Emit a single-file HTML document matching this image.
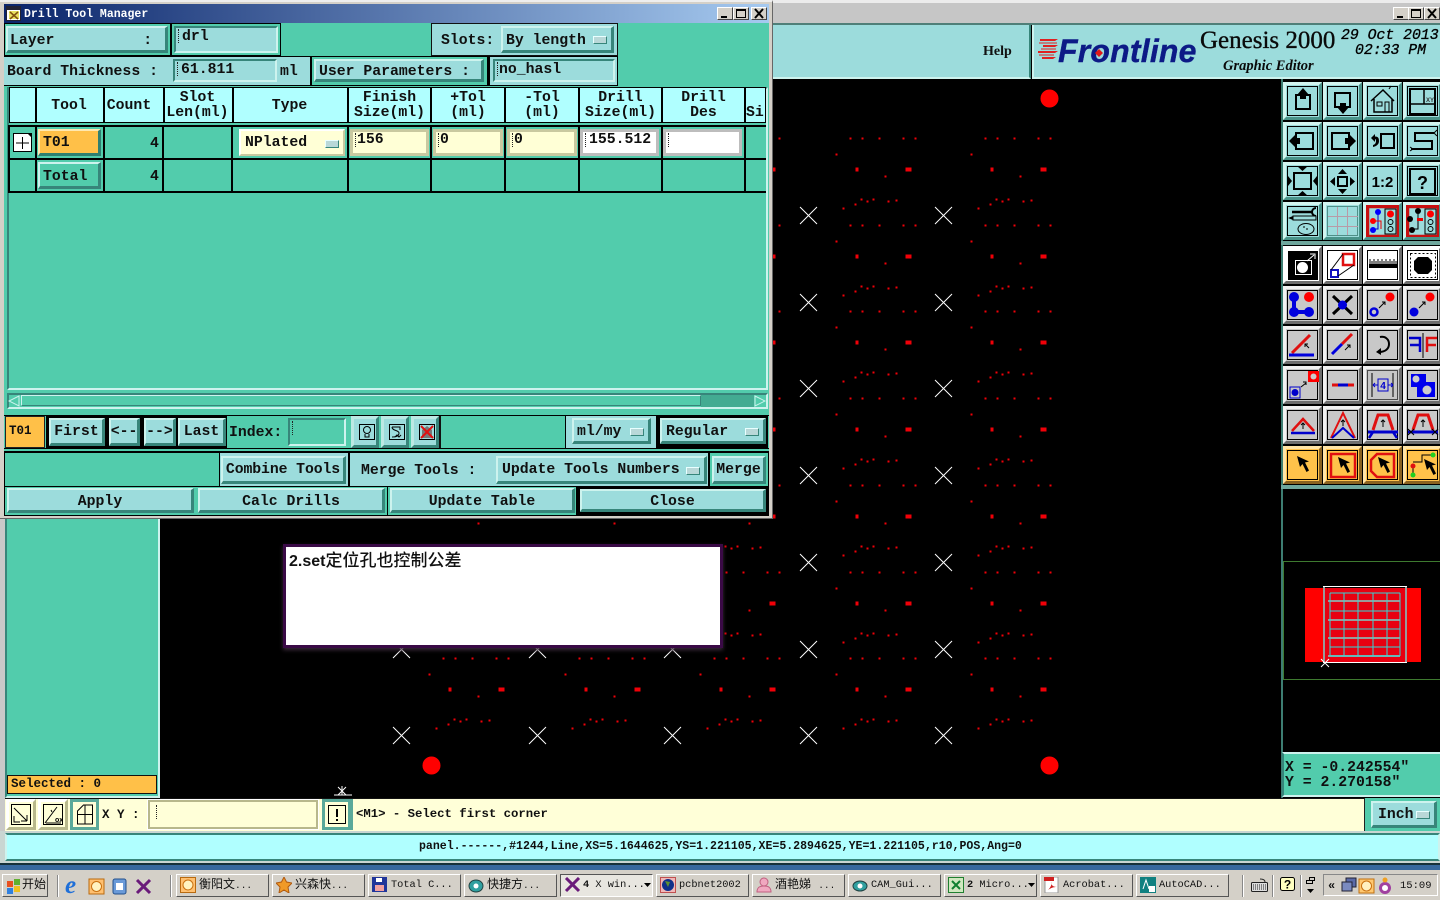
<!DOCTYPE html>
<html><head><meta charset="utf-8"><title>Drill Tool Manager</title>
<style>
html,body{margin:0;padding:0;width:1440px;height:900px;overflow:hidden;background:#000}
div,span,svg{position:absolute;box-sizing:border-box}
body{font:bold 14.8px/1 "Liberation Mono","Noto Sans CJK SC",monospace;color:#101010}
.tx{white-space:pre;line-height:16px}
.b{display:flex;align-items:center;justify-content:center;background:#9cdcdc;border:solid;border-width:2px 3px 3px 2px;border-color:#cdf3ee #37857a #37857a #cdf3ee;white-space:pre;padding-top:2px}
.p{padding-top:4px}
.l{justify-content:flex-start;padding-left:3px}
.i{background:#9cdcdc;border:2px solid;border-color:#37857a #cdf3ee #cdf3ee #37857a;white-space:pre;padding:0 0 0 6px;line-height:18px}
.i:before{content:"";position:absolute;left:2px;top:1px;height:14px;width:0;border-left:1px dotted #222}
.yi{background:#ffffd6;border:3px solid;border-color:#c9c9a0;white-space:pre;padding:0 0 0 4px;line-height:17px}
.yi:before{content:"";position:absolute;left:2px;top:1px;height:14px;width:0;border-left:1px dotted #222}
.wi{background:#fff;border-color:#bdbdbd;padding-left:6px}
.hd{background:#b0ffff;display:flex;align-items:center;justify-content:center;text-align:center;line-height:15px;white-space:pre;padding-top:2px}
.ln{background:#000}
.opt:after{content:"";position:absolute;right:4px;top:50%;margin-top:-3px;width:12px;height:6px;background:#b9d8d8;border:1px solid;border-color:#e8ffff #37857a #37857a #e8ffff}
.t{width:39px;height:38px;background:#9cdcdc;border:3px solid;border-color:#d2f5f0 #4a948a #4a948a #d2f5f0;overflow:hidden}
.g{background:#c8c8c8;border-color:#f2f2f2 #6e6e6e #6e6e6e #f2f2f2}
.w{background:#fff;border-color:#fff #6e6e6e #6e6e6e #fff}
.o{background:#ffc24a;border-color:#ffe4a6 #8a6220 #8a6220 #ffe4a6}
.t svg{left:-3px;top:-3px;width:39px;height:38px}
.tk{top:874px;height:23px;width:93px;background:#d4d0c8;border:1px solid;border-color:#fff #555 #555 #fff;font:10.3px/21px "Liberation Mono","Noto Sans CJK SC",monospace;color:#111;white-space:pre;overflow:hidden}
.tk span{left:22px;top:0}
.tk svg{left:3px;top:2px}
.tk .c{font-size:12px}
.tk i{font-style:normal;font-size:9.500px}
.wb{width:16px;height:13px;top:7px;background:#d4d0c8;border:1px solid;border-color:#fff #444 #444 #fff}
.wb svg{left:0;top:0}
.sep{width:2px;background:#fff;border-left:1px solid #888}
</style></head><body>

<!-- Main window background -->
<div style="left:0;top:0;width:1440px;height:900px;background:#000"></div>
<div style="left:773px;top:0;width:667px;height:3px;background:#ececec"></div>
<div style="left:773px;top:3px;width:667px;height:20px;background:#c6c6c6"></div>
<div style="left:773px;top:23px;width:667px;height:2px;background:#4f7f78"></div>

<div class="wb" style="left:1393px"><svg width="14" height="11"><rect x="3" y="8" width="6" height="2"/></svg></div>
<div class="wb" style="left:1408px"><svg width="14" height="11"><rect x="2.500" y="1.500" width="9" height="8" fill="none" stroke="#000"/><rect x="2" y="1" width="10" height="2"/></svg></div>
<div class="wb" style="left:1424px"><svg width="14" height="11"><path d="M3 1l8 9M11 1l-8 9" stroke="#000" stroke-width="2"/></svg></div>

<!-- Header band -->
<div style="left:773px;top:25px;width:258px;height:54px;background:#9cdcdc;border-bottom:2px solid #cdf3ee;border-right:2px solid #37857a"></div>
<div class="tx" style="left:983px;top:44px;font:bold 14px/16px 'Liberation Serif',serif">Help</div>
<div style="left:1032px;top:25px;width:408px;height:54px;background:#9cdcdc;border-left:2px solid #cdf3ee;border-bottom:2px solid #cdf3ee"></div>
<svg style="left:1038px;top:38px" width="22" height="25"><path d="M2 1h18l-3 2H2zM5 7h15l-3 2H5zM0 13h20l-3 2H0zM4 19h14l-3 2H4z" fill="#e02020"/><path d="M1 5h18M3 11h15M1 17h15" stroke="#e02020"/></svg>
<div class="tx" style="left:1058px;top:32px;font:italic bold 32px/38px 'Liberation Sans',sans-serif;color:#0c1a86;letter-spacing:.2px;-webkit-text-stroke:.4px #0c1a86">Frontline</div>
<svg style="left:1093px;top:47px" width="12" height="12"><path d="M6 2l4 4-4 4-4-4z" fill="#e01818"/></svg>
<div class="tx" style="left:1200px;top:26px;font:25px/29px 'Liberation Serif',serif;color:#0a0a0a;-webkit-text-stroke:.35px #0a0a0a">Genesis 2000</div>
<div class="tx" style="left:1223px;top:58px;font:italic bold 14.5px/17px 'Liberation Serif',serif;color:#0a0a0a">Graphic Editor</div>
<div class="tx" style="left:1341px;top:28px;font:italic 14.8px/16px 'Liberation Mono',monospace;color:#000;-webkit-text-stroke:.3px #000">29 Oct 2013</div>
<div class="tx" style="left:1355px;top:43px;font:italic 14.8px/16px 'Liberation Mono',monospace;color:#000;-webkit-text-stroke:.3px #000">02:33 PM</div>

<!-- PCB canvas -->
<svg style="left:160px;top:79px" width="1120" height="719" viewBox="160 79 1120 719" shape-rendering="crispEdges">
<defs>
<g id="c">
<g fill="#f00008">
<rect x="41" y="-78" width="2" height="2"/><rect x="53" y="-78" width="2" height="2"/><rect x="70" y="-78" width="2" height="2"/><rect x="94" y="-78" width="2" height="2"/><rect x="106" y="-78" width="2" height="2"/>
<rect x="27" y="-62" width="2" height="2"/>
<rect x="47" y="-48" width="3" height="4"/><rect x="97" y="-48" width="6" height="4"/>
<rect x="76" y="-40" width="2" height="2"/>
<rect x="52" y="-17" width="2" height="2"/><rect x="46" y="-12" width="2" height="2"/><rect x="58" y="-15" width="2" height="2"/><rect x="64" y="-17" width="2" height="2"/><rect x="79" y="-15" width="2" height="2"/><rect x="87" y="-16" width="2" height="2"/><rect x="34" y="-8" width="2" height="2"/>
</g>
<path d="M-8.500 -8.500L8.500 8.500M8.500 -8.500L-8.500 8.500" stroke="#fff" stroke-width="1" fill="none" shape-rendering="auto"/>
</g>
<g id="r"><use href="#c" x="401.500"/><use href="#c" x="537.500"/><use href="#c" x="672.500"/><use href="#c" x="808.500"/><use href="#c" x="943.500"/></g>
</defs>
<use href="#r" y="215.500"/><use href="#r" y="302.500"/><use href="#r" y="388.500"/><use href="#r" y="475.500"/><use href="#r" y="562.500"/><use href="#r" y="649.500"/><use href="#r" y="735.500"/>
<g fill="#f00" shape-rendering="auto"><circle cx="1049.500" cy="98.500" r="9"/><circle cx="431.500" cy="765.500" r="9"/><circle cx="1049.500" cy="765.500" r="9"/></g>
<path d="M334 795h18M338 787l8 8M346 787l-8 8M342 786v9" stroke="#fff" fill="none" shape-rendering="auto"/>
</svg>

<!-- Left panel -->
<div style="left:0;top:515px;width:5px;height:352px;background:#c9c9c9"></div>
<div style="left:5px;top:519px;width:155px;height:279px;background:#52ccac;border-right:2px solid #cdf3ee;border-left:2px solid #37857a;border-bottom:2px solid #cdf3ee"></div>
<div style="left:7px;top:775px;width:150px;height:19px;background:#ffc048;border:1px solid #111;font-size:12.500px;line-height:17px;padding-left:3px;white-space:pre">Selected : 0</div>

<!-- Toolbars right -->
<div style="left:1280px;top:79px;width:160px;height:410px;background:#000"></div>
<div style="left:1281px;top:79px;width:2px;height:719px;background:#3d7d72"></div>
<div style="left:1281px;top:241px;width:159px;height:4px;background:#6fa79d"></div>
<div style="left:1281px;top:485px;width:159px;height:4px;background:#6fa79d"></div>

<div class="t" style="left:1283px;top:82px"><svg><rect x="4.500" y="4.500" width="30" height="29" fill="none" stroke="#000"/><rect x="13" y="13" width="14" height="14" fill="none" stroke="#000" stroke-width="2"/><path d="M20 6l6 7h-3v4h-6v-4h-3z"/></svg></div>
<div class="t" style="left:1323px;top:82px"><svg><rect x="4.500" y="4.500" width="30" height="29" fill="none" stroke="#000"/><rect x="12" y="11" width="15" height="14" fill="none" stroke="#000" stroke-width="2"/><path d="M20 32l-6-7h3v-4h6v4h3z"/></svg></div>
<div class="t" style="left:1363px;top:82px"><svg><rect x="4.500" y="4.500" width="30" height="29" fill="none" stroke="#000"/><path d="M8 19L20 8l11 11M11 17v13h18V17" fill="none" stroke="#000" stroke-width="1.500"/><rect x="14" y="20" width="5" height="4" fill="none" stroke="#000"/><rect x="22" y="20" width="4" height="10" fill="none" stroke="#000"/><path d="M26 7l2-3" stroke="#000"/></svg></div>
<div class="t" style="left:1403px;top:82px"><svg><rect x="4.500" y="4.500" width="30" height="29" fill="none" stroke="#000"/><rect x="7" y="7" width="25" height="25" fill="none" stroke="#000" stroke-width="2"/><path d="M7 22h25M21 7v15" stroke="#000" stroke-width="1.500"/><text x="23" y="20" font-size="6" font-family="Liberation Sans" fill="#333">XY</text></svg></div>

<div class="t" style="left:1283px;top:122px"><svg><rect x="4.500" y="4.500" width="30" height="29" fill="none" stroke="#000"/><rect x="13" y="11" width="17" height="16" fill="none" stroke="#000" stroke-width="2"/><path d="M6 19l6-6v3h5v6h-5v3z"/></svg></div>
<div class="t" style="left:1323px;top:122px"><svg><rect x="4.500" y="4.500" width="30" height="29" fill="none" stroke="#000"/><rect x="9" y="11" width="17" height="16" fill="none" stroke="#000" stroke-width="2"/><path d="M33 19l-6-6v3h-5v6h5v3z"/></svg></div>
<div class="t" style="left:1363px;top:122px"><svg><rect x="4.500" y="4.500" width="30" height="29" fill="none" stroke="#000"/><rect x="18" y="12" width="13" height="14" fill="none" stroke="#000" stroke-width="2"/><path d="M8 16l4-4v2.500c3 0 4 1.500 4 4.500s-2 5-6 6v-2c2-.5 3-2 3-4s-1-2-1-2v3z"/></svg></div>
<div class="t" style="left:1403px;top:122px"><svg><rect x="4.500" y="4.500" width="30" height="29" fill="none" stroke="#000"/><path d="M31 11H12v8h17v8H8" fill="none" stroke="#000" stroke-width="2"/><path d="M34 8l-3 3 3 3M7 25l3 2-3 2" fill="none" stroke="#000"/></svg></div>

<div class="t" style="left:1283px;top:162px"><svg><rect x="4.500" y="4.500" width="30" height="29" fill="none" stroke="#000"/><rect x="11" y="11" width="17" height="16" fill="none" stroke="#000" stroke-width="2"/><path d="M14 4h11l-5.500 5zM14 34h11l-5.500-5zM5 14v10l4-5zM34 14v10l-4-5z"/></svg></div>
<div class="t" style="left:1323px;top:162px"><svg><rect x="4.500" y="4.500" width="30" height="29" fill="none" stroke="#000"/><rect x="15" y="15" width="9" height="9" fill="none" stroke="#000" stroke-width="2"/><path d="M15 12h9l-4.500-5zM15 27h9l-4.500 5zM12 15v9l-5-4.500zM27 15v9l5-4.500z"/></svg></div>
<div class="t" style="left:1363px;top:162px"><svg><rect x="4.500" y="4.500" width="30" height="29" fill="none" stroke="#000"/><text x="19.500" y="25" text-anchor="middle" font-size="15" font-family="Liberation Sans" font-weight="bold">1:2</text></svg></div>
<div class="t" style="left:1403px;top:162px"><svg><rect x="4.500" y="4.500" width="30" height="29" fill="none" stroke="#000"/><rect x="7" y="7" width="25" height="25" fill="none" stroke="#000" stroke-width="2"/><text x="19.500" y="27" text-anchor="middle" font-size="18" font-family="Liberation Sans" font-weight="bold">?</text></svg></div>

<div class="t" style="left:1283px;top:202px"><svg><rect x="4.500" y="4.500" width="30" height="29" fill="none" stroke="#000"/><path d="M9 10h20" stroke="#000" stroke-width="2.500"/><path d="M33 6a4 4 0 1 0 0 8" fill="none" stroke="#000" stroke-width="2"/><rect x="10" y="14" width="23" height="4" fill="#9cdcdc" stroke="#000"/><path d="M5 16l5-2v4z"/><ellipse cx="23" cy="27" rx="8" ry="5.500" fill="none" stroke="#000"/><path d="M20 25h2M23 27h2" stroke="#000"/></svg></div>
<div class="t" style="left:1323px;top:202px"><svg><rect x="4.500" y="4.500" width="30" height="29" fill="none" stroke="#4f8f88"/><path d="M14.500 5v28M24.500 5v28M5 14.500h30M5 24.500h30" stroke="#b89aa6"/></svg></div>
<div class="t" style="left:1363px;top:202px"><svg><rect x="4.500" y="4.500" width="31" height="30" fill="none" stroke="#c81010" stroke-width="3.500"/><rect x="22" y="7" width="11" height="25" fill="none" stroke="#000"/><circle cx="27.500" cy="12" r="3.500" fill="#f00"/><circle cx="27.500" cy="20" r="2.500" fill="none" stroke="#000"/><circle cx="27.500" cy="27" r="2.500" fill="none" stroke="#000"/><path d="M15 10v17H10" fill="none" stroke="#00c" stroke-width="1"/><path d="M11 19h7v8" fill="none" stroke="#e00"/><circle cx="15" cy="10" r="3" fill="#00f"/><circle cx="10" cy="19" r="3" fill="#f00"/><circle cx="10" cy="28" r="3" fill="#00f"/></svg></div>
<div class="t" style="left:1403px;top:202px"><svg><rect x="4.500" y="4.500" width="31" height="30" fill="none" stroke="#c81010" stroke-width="3.500"/><rect x="22" y="7" width="11" height="25" fill="none" stroke="#000"/><circle cx="27.500" cy="12" r="3.500" fill="#f00"/><circle cx="27.500" cy="20" r="2.500" fill="none" stroke="#000"/><circle cx="27.500" cy="27" r="2.500" fill="none" stroke="#000"/><path d="M15 10v17H10" fill="none" stroke="#000" stroke-width="1"/><path d="M14 16h6v3h-6z" fill="#e00"/><circle cx="15" cy="9" r="3"/><circle cx="7" cy="17" r="3"/><circle cx="9" cy="28" r="3"/></svg></div>

<!-- Set 2 -->
<div class="t w" style="left:1283px;top:246px"><svg><rect x="5" y="5" width="30" height="29"/><rect x="12.500" y="14.500" width="16" height="14" fill="none" stroke="#fff"/><circle cx="19.500" cy="21.500" r="5.500" fill="#fff"/><path d="M24 15l7-6M27 8h5v5" stroke="#fff" fill="none"/></svg></div>
<div class="t w" style="left:1323px;top:246px"><svg><rect x="4.500" y="4.500" width="30" height="29" fill="none" stroke="#000"/><rect x="20" y="8" width="11" height="11" fill="none" stroke="#e01010" stroke-width="2.500"/><rect x="8" y="24" width="7" height="7" fill="none" stroke="#1010c0" stroke-width="2"/><path d="M20 8L8 24M31 19L15 30" stroke="#000"/></svg></div>
<div class="t w" style="left:1363px;top:246px"><svg><rect x="4.500" y="4.500" width="30" height="29" fill="none" stroke="#000"/><rect x="6" y="18" width="28" height="4"/><path d="M7 13v5M9 15v3M11 13v5M13 15v3M15 13v5M17 15v3M19 13v5M21 15v3M23 13v5M25 15v3M27 13v5M29 15v3M31 13v5M33 15v3" stroke="#000"/></svg></div>
<div class="t w" style="left:1403px;top:246px"><svg><rect x="4.500" y="4.500" width="30" height="29" fill="none" stroke="#000"/><rect x="7.500" y="7.500" width="25" height="24" fill="none" stroke="#000" stroke-dasharray="2 2"/><path d="M15 11h10l4 4v9l-4 4H15l-4-4v-9z"/></svg></div>

<div class="t g" style="left:1283px;top:286px"><svg><rect x="4.500" y="4.500" width="30" height="29" fill="none" stroke="#000"/><path d="M11 11v15h15" fill="none" stroke="#00d" stroke-width="4"/><circle cx="11" cy="11" r="5" fill="#00d"/><circle cx="11" cy="26" r="5" fill="#00d"/><circle cx="26" cy="26" r="5" fill="#00d"/><circle cx="26" cy="11" r="5" fill="#f00"/></svg></div>
<div class="t g" style="left:1323px;top:286px"><svg><rect x="4.500" y="4.500" width="30" height="29" fill="none" stroke="#000"/><path d="M10 10l19 18M29 10L10 28" stroke="#000" stroke-width="3"/><circle cx="19.500" cy="19" r="4.500" fill="#00d"/></svg></div>
<div class="t g" style="left:1363px;top:286px"><svg><rect x="4.500" y="4.500" width="30" height="29" fill="none" stroke="#000"/><circle cx="11" cy="26" r="3.500" fill="none" stroke="#00d" stroke-width="2.500"/><circle cx="27" cy="11" r="4.500" fill="#f00"/><path d="M16 22l6-6M19 16h3v3" fill="none" stroke="#000"/></svg></div>
<div class="t g" style="left:1403px;top:286px"><svg><rect x="4.500" y="4.500" width="30" height="29" fill="none" stroke="#000"/><circle cx="11" cy="26" r="4.500" fill="#00d"/><circle cx="27" cy="11" r="4.500" fill="#f00"/><path d="M16 22l6-6M19 16h3v3" fill="none" stroke="#000"/></svg></div>

<div class="t g" style="left:1283px;top:326px"><svg><rect x="4.500" y="4.500" width="30" height="29" fill="none" stroke="#000"/><path d="M9 27L27 9" stroke="#e01010" stroke-width="3"/><path d="M6 29h25" stroke="#00d" stroke-width="3"/><path d="M26 22l-4-4M22 21v-3h3" fill="none" stroke="#000"/></svg></div>
<div class="t g" style="left:1323px;top:326px"><svg><rect x="4.500" y="4.500" width="30" height="29" fill="none" stroke="#000"/><path d="M19 18L29 8" stroke="#e01010" stroke-width="3"/><path d="M9 28L19 18" stroke="#00d" stroke-width="3"/><path d="M22 24l5-5M24 19h3v3" fill="none" stroke="#000"/></svg></div>
<div class="t g" style="left:1363px;top:326px"><svg><rect x="4.500" y="4.500" width="30" height="29" fill="none" stroke="#000"/><path d="M17 11c5-1 9 2 9 7s-4 8-10 8" fill="none" stroke="#000" stroke-width="2"/><path d="M13 26l5-4v7z"/></svg></div>
<div class="t g" style="left:1403px;top:326px"><svg><rect x="4.500" y="4.500" width="30" height="29" fill="none" stroke="#000"/><path d="M6 12h11v14M7 19h10" fill="none" stroke="#00c" stroke-width="2.500"/><path d="M34 12H24v14M24 19h9" fill="none" stroke="#e01010" stroke-width="2.500"/><path d="M20 7v25" stroke="#000"/></svg></div>

<div class="t g" style="left:1283px;top:366px"><svg><rect x="4.500" y="4.500" width="30" height="29" fill="none" stroke="#000"/><rect x="25" y="5" width="11" height="11" fill="#f00"/><circle cx="30.500" cy="10.500" r="3" fill="#ccc"/><rect x="7" y="21" width="10" height="11" fill="none" stroke="#00c"/><circle cx="12" cy="26.500" r="3.500" fill="#00c"/><path d="M18 21l5-4M20 16h3v3" fill="none" stroke="#000"/></svg></div>
<div class="t g" style="left:1323px;top:366px"><svg><rect x="4.500" y="4.500" width="30" height="29" fill="none" stroke="#000"/><path d="M9 19h6M25 19h6" stroke="#e01010" stroke-width="3"/><path d="M15 19h10" stroke="#00c" stroke-width="3"/></svg></div>
<div class="t g" style="left:1363px;top:366px"><svg><rect x="4.500" y="4.500" width="30" height="29" fill="none" stroke="#4a4a4a"/><path d="M9 7v24M30 7v24" stroke="#000"/><rect x="15" y="13" width="10" height="12" fill="none" stroke="#00c"/><path d="M10 19h5M25 19h5M10 19l2-2M10 19l2 2M30 19l-2-2M30 19l-2 2" stroke="#00c"/><text x="20" y="23" text-anchor="middle" font-size="10" fill="#00c" font-family="Liberation Sans">4</text></svg></div>
<div class="t g" style="left:1403px;top:366px"><svg><rect x="4.500" y="4.500" width="30" height="29" fill="none" stroke="#000"/><rect x="8" y="8" width="15" height="13" fill="#00e"/><rect x="14" y="16" width="18" height="15" fill="#00e"/><circle cx="13" cy="13" r="3.500" fill="#ccc"/><circle cx="24" cy="24" r="4.500" fill="#ccc"/></svg></div>

<div class="t g" style="left:1283px;top:406px"><svg><rect x="4.500" y="4.500" width="30" height="29" fill="none" stroke="#000"/><path d="M9 25L20 13l11 12" fill="none" stroke="#e01010" stroke-width="2.500"/><path d="M8 27h24" stroke="#00c" stroke-width="2.500"/><path d="M20 17v6M18 19l2-2 2 2" fill="none" stroke="#000"/></svg></div>
<div class="t g" style="left:1323px;top:406px"><svg><rect x="4.500" y="4.500" width="30" height="29" fill="none" stroke="#000"/><path d="M8 32L20 7l12 25" fill="none" stroke="#e01010" stroke-width="2"/><path d="M9 32l11-10 11 10" fill="none" stroke="#00c" stroke-width="2"/><path d="M20 14v6M18 16l2-2 2 2" fill="none" stroke="#000"/></svg></div>
<div class="t g" style="left:1363px;top:406px"><svg><rect x="4.500" y="4.500" width="30" height="29" fill="none" stroke="#000"/><path d="M10 24l5-15h10l5 15" fill="none" stroke="#e01010" stroke-width="3"/><path d="M5 26h30" stroke="#00c" stroke-width="3"/><path d="M6 32l4-6M34 32l-4-6" stroke="#00c" stroke-width="2.500"/><path d="M20 14v7M18 16l2-2 2 2" fill="none" stroke="#000"/></svg></div>
<div class="t g" style="left:1403px;top:406px"><svg><rect x="4.500" y="4.500" width="30" height="29" fill="none" stroke="#000"/><path d="M10 24l5-15h10l5 15" fill="none" stroke="#e01010" stroke-width="3"/><path d="M5 26h30" stroke="#00c" stroke-width="3"/><path d="M5 23l6 6M11 23l-6 6M29 23l6 6M35 23l-6 6" stroke="#000"/><path d="M20 14v7M18 16l2-2 2 2" fill="none" stroke="#000"/></svg></div>

<div class="t o" style="left:1283px;top:446px"><svg><rect x="4.500" y="4.500" width="30" height="29" fill="none" stroke="#000"/><path d="M14 10l3 11 2.500-3 4 8 2.500-1.500-4-8 4-1z"/></svg></div>
<div class="t o" style="left:1323px;top:446px"><svg><rect x="4.500" y="4.500" width="30" height="29" fill="none" stroke="#000"/><rect x="8" y="8" width="24" height="23" fill="none" stroke="#e01010" stroke-width="2.500"/><path d="M15 11l3 11 2.500-3 4 8 2.500-1.500-4-8 4-1z"/></svg></div>
<div class="t o" style="left:1363px;top:446px"><svg><rect x="4.500" y="4.500" width="30" height="29" fill="none" stroke="#000"/><path d="M14 8h17v23H14l-6-6V14z" fill="none" stroke="#e01010" stroke-width="2.500"/><path d="M15 11l3 11 2.500-3 4 8 2.500-1.500-4-8 4-1z"/></svg></div>
<div class="t o" style="left:1403px;top:446px"><svg><rect x="4.500" y="4.500" width="30" height="29" fill="none" stroke="#000"/><path d="M10 18v10M10 16h9V9h12" fill="none" stroke="#000"/><circle cx="10" cy="20" r="2.500" fill="#e01010"/><circle cx="10" cy="29" r="2.500" fill="#20d020"/><circle cx="30" cy="9" r="2.500" fill="#20d020"/><path d="M21 13l3 11 2.500-3 4 8 2.500-1.500-4-8 4-1z"/></svg></div>

<!-- Mini map -->
<div style="left:1283px;top:561px;width:157px;height:119px;border:1px solid #3e7a30;border-right:0"></div>
<svg style="left:1283px;top:560px" width="157" height="120" viewBox="1283 560 157 120" shape-rendering="crispEdges">
<rect x="1305" y="588" width="18" height="74" fill="#f00"/><rect x="1407" y="588" width="14" height="74" fill="#f00"/><rect x="1323" y="588" width="84" height="74" fill="#e80010"/>
<g fill="none" stroke="#9a9a9a" stroke-width="2"><path d="M1324 587v75M1406 587v75M1328 601h72M1328 620h72M1328 638h72M1328 656h72"/></g>
<g stroke="#30d8d8" stroke-width="1" fill="none"><path d="M1330 593h70M1330 611h70M1330 629h70M1330 647h70M1330 656h70M1330 593v63M1344 593v63M1358 593v63M1373 593v63M1387 593v63M1400 593v63"/></g>
<path d="M1323 586.500h84M1323 662.500h84" stroke="#fff"/>
<path d="M1321 659l8 8M1329 659l-8 8" stroke="#fff" shape-rendering="auto"/>
</svg>

<!-- coordinate box -->
<div style="left:1282px;top:752px;width:158px;height:45px;background:#52ccac;border-top:2px solid #cdf3ee;border-left:2px solid #37857a;border-bottom:2px solid #cdf3ee"></div>
<div class="tx" style="left:1285px;top:760px">X = -0.242554"</div>
<div class="tx" style="left:1285px;top:775px">Y = 2.270158"</div>

<!-- Command bar -->
<div style="left:5px;top:798px;width:1435px;height:33px;background:#ffffd8;border-top:1px solid #111"></div>
<div class="t" style="left:6px;top:799px;width:30px;height:31px;background:#ffffd8;border-color:#fff #b8b88c #b8b88c #fff"><svg style="width:30px;height:31px"><rect x="5.500" y="5.500" width="19" height="20" fill="none" stroke="#000"/><path d="M8 9l13 13M21 22v-6M21 22h-6M8 17v6h6" fill="none" stroke="#000" stroke-width="1"/></svg></div>
<div class="t" style="left:38px;top:799px;width:30px;height:31px;background:#ffffd8;border-color:#fff #b8b88c #b8b88c #fff"><svg style="width:30px;height:31px"><rect x="5.500" y="5.500" width="19" height="20" fill="none" stroke="#000"/><path d="M7 24L19 8M14 13l-1-2M8 24h15" fill="none" stroke="#000"/><text x="17" y="23" font-size="7" font-family="Liberation Sans">ox</text></svg></div>
<div class="t" style="left:70px;top:799px;width:29px;height:31px;background:#ffffd8;border-color:#5aa99a"><svg style="width:29px;height:31px"><path d="M7.500 25V12l6-6h9v19zM7.500 15.500h15M15 6v19" fill="none" stroke="#000"/></svg></div>
<div class="tx" style="left:102px;top:807px;font-size:12.500px">X Y :</div>
<div style="left:148px;top:800px;width:170px;height:29px;background:#ffffd8;border:2px solid #b8b88c;outline:1px solid #fff"></div>
<div style="left:156px;top:805px;height:14px;border-left:1px dotted #222"></div>
<div class="t" style="left:322px;top:799px;width:29px;height:31px;background:#ffffd8;border-color:#5aa99a"><svg style="width:29px;height:31px"><rect x="6.500" y="6.500" width="17" height="18" fill="none" stroke="#000"/><rect x="14" y="10" width="2" height="8"/><rect x="14" y="20" width="2" height="2"/></svg></div>
<div style="left:351px;top:799px;width:2px;height:31px;background:#5aa99a"></div>
<div class="tx" style="left:356px;top:806px;font-size:12.300px">&lt;M1&gt; - Select first corner</div>
<div style="left:1364px;top:798px;width:76px;height:33px;background:#52ccac;border-left:1px solid #222"></div>
<div class="b opt l" style="left:1371px;top:801px;width:66px;height:27px;padding-left:5px">Inch</div>

<!-- Status -->
<div style="left:0;top:831px;width:1440px;height:34px;background:#c9d6d2"></div>
<div style="left:5px;top:833px;width:1435px;height:28px;background:#b0ffff;border:2px solid;border-color:#37857a #cdf3ee #37857a #cdf3ee"></div>
<div class="tx" style="left:419px;top:839px;font-size:11.550px;width:620px">panel.------,#1244,Line,XS=5.1644625,YS=1.221105,XE=5.2894625,YE=1.221105,r10,POS,Ang=0</div>

<!-- Taskbar -->
<div style="left:0;top:863px;width:1440px;height:2px;background:#17323a"></div>
<div style="left:0;top:865px;width:1440px;height:5px;background:#37699e"></div>
<div style="left:0;top:870px;width:1440px;height:30px;background:#d4d0c8"></div>
<div class="tk" style="left:2px;width:46px">
<svg width="18" height="18"><rect x="1" y="4" width="6" height="6" fill="#e85020"/><rect x="8" y="2" width="6" height="6" fill="#60b030"/><rect x="1" y="11" width="6" height="6" fill="#3080e0"/><rect x="8" y="9" width="6" height="6" fill="#f0c020"/></svg>
<span class="c" style="left:19px">开始</span></div>
<div class="sep" style="left:57px;top:875px;height:22px"></div>
<svg style="left:64px;top:876px" width="90" height="20">
<text x="1" y="17" font-family="Liberation Serif" font-weight="bold" font-style="italic" font-size="25" fill="#1f6fd8">e</text>
<rect x="25" y="3" width="15" height="15" fill="#ffc070" stroke="#b86a10"/><circle cx="32.500" cy="10.500" r="5" fill="#fff2c0" stroke="#c87010"/>
<rect x="49" y="3" width="13" height="15" rx="2" fill="#6a9ad8" stroke="#23508c"/><rect x="52" y="7" width="7" height="7" fill="#fff"/>
<path d="M73 4l13 13M86 4L73 17" stroke="#6a1a7a" stroke-width="3"/>
</svg>
<div class="sep" style="left:170px;top:875px;height:22px"></div>
<div class="tk" style="left:176px">
<svg width="16" height="16"><rect x=".5" y=".5" width="15" height="15" fill="#ffc070" stroke="#b86a10"/><circle cx="8" cy="8" r="5" fill="#fff2c0" stroke="#c87010"/></svg>
<span class="c">衡阳文<i>...</i></span></div>
<div class="tk" style="left:272px">
<svg width="16" height="16"><path d="M8 0l2.500 5 5.500 1-4 4 1 6-5-3-5 3 1-6-4-4 5.500-1z" fill="#f09a28" stroke="#b05a10"/></svg>
<span class="c">兴森快<i>...</i></span></div>
<div class="tk" style="left:368px">
<svg width="16" height="16"><rect width="15" height="15" fill="#20359a"/><rect x="3" y="8" width="9" height="6" fill="#f0a0a0"/><rect x="4" y="1" width="6" height="4" fill="#fff"/></svg>
<span>Total C...</span></div>
<div class="tk" style="left:464px">
<svg width="16" height="16"><ellipse cx="8" cy="9" rx="7" ry="6" fill="#30a0a0" stroke="#204040"/><circle cx="8" cy="9" r="2.500" fill="#fff"/></svg>
<span class="c">快捷方<i>...</i></span></div>
<div class="tk" style="left:560px;background:#e8e6e0;border-color:#555 #fff #fff #555">
<svg width="18" height="16"><path d="M2 1l13 13M15 1L2 14" stroke="#6a1a7a" stroke-width="3"/></svg>
<span><b>4</b> X win...</span><svg style="left:83px;top:8px" width="7" height="4"><path d="M0 0h7L3.500 4z"/></svg></div>
<div class="tk" style="left:656px">
<svg width="16" height="16"><rect x=".5" y=".5" width="15" height="15" fill="#f0b8b8" stroke="#c05050"/><circle cx="8" cy="8" r="6" fill="#10308a"/><path d="M5 4l5 1-2 5z" fill="#609030"/></svg>
<span>pcbnet2002</span></div>
<div class="tk" style="left:752px">
<svg width="16" height="16"><circle cx="8" cy="5" r="4" fill="#f0a8c0" stroke="#c06080"/><path d="M1 15c0-5 3-6 7-6s7 1 7 6z" fill="#f0a8c0" stroke="#c06080"/></svg>
<span class="c">酒艳娣 <i>...</i></span></div>
<div class="tk" style="left:848px">
<svg width="16" height="16"><ellipse cx="8" cy="9" rx="7" ry="5" fill="#30a0a0" stroke="#204040"/><circle cx="8" cy="9" r="2.500" fill="#fff"/></svg>
<span>CAM_Gui...</span></div>
<div class="tk" style="left:944px">
<svg width="16" height="16"><rect x=".5" y=".5" width="15" height="15" fill="#d0e8c0" stroke="#208030"/><path d="M4 4l8 8M12 4l-8 8" stroke="#108030" stroke-width="2"/></svg>
<span><b>2</b> Micro...</span><svg style="left:83px;top:8px" width="7" height="4"><path d="M0 0h7L3.500 4z"/></svg></div>
<div class="tk" style="left:1040px">
<svg width="16" height="16"><rect x="1" y="0" width="13" height="16" fill="#fff" stroke="#999"/><rect x="0" y="0" width="10" height="4" fill="#d02020"/><path d="M4 13c3-3 4-6 3-8 0 3 2 5 6 5-4 0-6 1-9 3z" fill="#d02020"/></svg>
<span>Acrobat...</span></div>
<div class="tk" style="left:1136px">
<svg width="16" height="16"><rect width="16" height="16" fill="#108080"/><rect x="9" y="9" width="6" height="6" fill="#fff"/><path d="M3 12L6 3l3 9" stroke="#fff" fill="none"/></svg>
<span>AutoCAD...</span></div>
<div class="sep" style="left:1242px;top:875px;height:22px"></div>
<svg style="left:1251px;top:878px" width="18" height="15"><rect x=".5" y="4.500" width="16" height="9" rx="1" fill="#ddd" stroke="#222"/><path d="M2 7h13M2 9h13M2 11h13" stroke="#222" stroke-dasharray="1 1"/><path d="M9 1c3 0 5 1 5 3" stroke="#222" fill="none"/></svg>
<div class="sep" style="left:1272px;top:875px;height:22px"></div>
<svg style="left:1280px;top:877px" width="17" height="17"><rect x=".5" y=".5" width="14" height="13" rx="2" fill="#ffffc0" stroke="#000"/><text x="7.500" y="11.500" text-anchor="middle" font-size="12" font-weight="bold" font-family="Liberation Sans">?</text></svg>
<div class="sep" style="left:1300px;top:875px;height:22px"></div>
<svg style="left:1306px;top:877px" width="10" height="17"><rect x="3.500" y=".5" width="5" height="3" fill="none" stroke="#000"/><rect x=".5" y="3.500" width="6" height="3" fill="#d4d0c8" stroke="#000"/><path d="M1 12h7l-3.500 4z"/></svg>
<div style="left:1323px;top:874px;width:115px;height:22px;border:1px solid;border-color:#888 #fff #fff #888"></div>
<div class="tx" style="left:1328px;top:878px;font-size:12px">«</div>
<svg style="left:1341px;top:877px" width="56" height="18">
<rect x="5" y="1" width="10" height="9" fill="#5a6aa8" stroke="#223"/><rect x="1" y="5" width="10" height="9" fill="#7a8ac0" stroke="#223"/>
<rect x="18" y="2" width="15" height="14" fill="#ffc870" stroke="#c07010"/><circle cx="25.500" cy="9" r="5" fill="#fff0c0" stroke="#c87010"/>
<circle cx="44" cy="11" r="6" fill="#a040a0"/><circle cx="44" cy="11" r="3" fill="#fff"/><circle cx="44" cy="3" r="2.500" fill="#f0a020"/>
</svg>
<div class="tx" style="left:1400px;top:879px;font:10.500px/14px 'Liberation Mono',monospace;color:#111">15:09</div>

<!-- Note -->
<div style="left:283px;top:544px;width:440px;height:104px;background:#fff;border:3px solid #3a0a46;box-shadow:0 2px 4px #3a2a3a"></div>
<div class="tx" style="left:289px;top:551px;font:bold 16px/19px 'Liberation Sans','Noto Sans CJK SC',sans-serif;color:#111">2.set<span style="position:static;font-size:17px;font-weight:500">定位孔也控制公差</span></div>

<!-- Drill Tool Manager -->
<div style="left:0;top:0;width:773px;height:519px;background:#d4d0c8;border-top:2px solid #eee;border-right:1px solid #666;border-bottom:1px solid #666"></div>
<div style="left:4px;top:4px;width:765px;height:19px;background:linear-gradient(90deg,#0a246a,#a6caf0)"></div>
<svg style="left:6px;top:6px" width="16" height="16"><rect x=".5" y=".5" width="14" height="14" fill="#fff" stroke="#223"/><rect x="1" y="1" width="13" height="3" fill="#223"/><rect x="3" y="5" width="10" height="8" fill="#e8e060"/><path d="M4 6l8 7M12 6l-8 7" stroke="#805010" stroke-width="1.500"/></svg>
<div class="tx" style="left:24px;top:8px;font:bold 11.500px/14px 'Liberation Mono',monospace;color:#fff;letter-spacing:0">Drill Tool Manager</div>
<div class="wb" style="left:717px"><svg width="14" height="11"><rect x="3" y="8" width="6" height="2"/></svg></div>
<div class="wb" style="left:733px"><svg width="14" height="11"><rect x="2.500" y="1.500" width="9" height="8" fill="none" stroke="#000"/><rect x="2" y="1" width="10" height="2"/></svg></div>
<div class="wb" style="left:751px"><svg width="14" height="11"><path d="M3 1l8 9M11 1l-8 9" stroke="#000" stroke-width="2"/></svg></div>

<div style="left:4px;top:23px;width:765px;height:492px;background:#52ccac"></div>

<!-- Row 1 -->
<div class="ln" style="left:4px;top:23px;width:277px;height:33px"></div>
<div style="left:5px;top:24px;width:165px;height:31px;background:#52ccac"></div>
<div class="b l p" style="left:6px;top:26px;width:162px;height:27px;padding-left:2px">Layer          :</div>
<div style="left:172px;top:24px;width:108px;height:31px;background:#52ccac"></div>
<div class="i" style="left:174px;top:26px;width:104px;height:27px">drl</div>
<div style="left:431px;top:23px;width:187px;height:33px;background:#9cdcdc;border:1px solid #111"></div>
<div class="tx" style="left:441px;top:33px">Slots:</div>
<div class="b opt l p" style="left:501px;top:26px;width:113px;height:27px;padding-left:3px">By length</div>

<!-- Row 2 -->
<div class="ln" style="left:4px;top:56px;width:614px;height:30px"></div>
<div style="left:4px;top:57px;width:306px;height:28px;background:#9cdcdc"></div>
<div class="tx" style="left:7px;top:64px">Board Thickness :</div>
<div class="i" style="left:173px;top:59px;width:104px;height:23px">61.811</div>
<div class="tx" style="left:280px;top:64px">ml</div>
<div style="left:312px;top:57px;width:175px;height:28px;background:#52ccac"></div>
<div class="b l p" style="left:314px;top:59px;width:170px;height:23px">User Parameters :</div>
<div style="left:490px;top:57px;width:127px;height:28px;background:#9cdcdc"></div>
<div class="i" style="left:493px;top:59px;width:122px;height:23px;padding-left:4px">no_hasl</div>

<!-- Table -->
<div style="left:7px;top:87px;width:761px;height:303px;border:2px solid;border-color:#37857a #cdf3ee #cdf3ee #37857a"></div>
<div class="ln" style="left:9px;top:87px;width:757px;height:36px"></div>
<div class="hd" style="left:10px;top:88px;width:25px;height:34px"></div>
<div class="hd" style="left:37px;top:88px;width:66px;height:34px;padding-right:2px">Tool</div>
<div class="hd" style="left:105px;top:88px;width:58px;height:34px;padding-right:10px">Count</div>
<div class="hd" style="left:165px;top:88px;width:67px;height:34px;padding-right:2px">Slot
Len(ml)</div>
<div class="hd" style="left:234px;top:88px;width:113px;height:34px;padding-right:2px">Type</div>
<div class="hd" style="left:349px;top:88px;width:81px;height:34px">Finish
Size(ml)</div>
<div class="hd" style="left:432px;top:88px;width:72px;height:34px">+Tol
(ml)</div>
<div class="hd" style="left:506px;top:88px;width:72px;height:34px">-Tol
(ml)</div>
<div class="hd" style="left:580px;top:88px;width:81px;height:34px">Drill
Size(ml)</div>
<div class="hd" style="left:663px;top:88px;width:81px;height:34px">Drill
Des</div>
<div class="hd" style="left:746px;top:88px;width:19px;height:34px;justify-content:flex-start;padding-top:16px;overflow:hidden">Si</div>

<div class="ln" style="left:8px;top:125px;width:758px;height:2px"></div>
<div class="ln" style="left:8px;top:158px;width:758px;height:2px"></div>
<div class="ln" style="left:8px;top:191px;width:758px;height:2px"></div>
<div class="ln" style="left:8px;top:125px;width:2px;height:68px"></div>
<div class="ln" style="left:35px;top:125px;width:2px;height:68px"></div>
<div class="ln" style="left:103px;top:125px;width:2px;height:68px"></div>
<div class="ln" style="left:162px;top:125px;width:2px;height:68px"></div>
<div class="ln" style="left:231px;top:125px;width:2px;height:68px"></div>
<div class="ln" style="left:347px;top:125px;width:2px;height:68px"></div>
<div class="ln" style="left:430px;top:125px;width:2px;height:68px"></div>
<div class="ln" style="left:504px;top:125px;width:2px;height:68px"></div>
<div class="ln" style="left:578px;top:125px;width:2px;height:68px"></div>
<div class="ln" style="left:661px;top:125px;width:2px;height:68px"></div>
<div class="ln" style="left:744px;top:125px;width:2px;height:68px"></div>

<svg style="left:13px;top:133px" width="20" height="20"><rect x=".5" y=".5" width="18" height="18" fill="#fff" stroke="#000"/><path d="M9.500 4v12M3 10h13" stroke="#000"/><path d="M15 1h3v3z"/></svg>
<div class="b l" style="left:38px;top:129px;width:63px;height:27px;background:#ffc048;border-color:#ffe8b0 #2f7f70 #2f7f70 #ffe8b0">T01</div>
<div class="b l p" style="left:38px;top:162px;width:63px;height:27px;background:#52ccac">Total</div>
<div class="tx" style="left:150px;top:136px">4</div>
<div class="tx" style="left:150px;top:169px">4</div>
<div class="b opt l" style="left:239px;top:129px;width:106px;height:27px;background:#ffffd6;border:2px solid;border-color:#fff #c9c9a0 #c9c9a0 #fff;padding-left:4px">NPlated</div>
<div class="yi" style="left:350px;top:129px;width:79px;height:27px">156</div>
<div class="yi" style="left:433px;top:129px;width:70px;height:27px">0</div>
<div class="yi" style="left:507px;top:129px;width:70px;height:27px">0</div>
<div class="yi wi" style="left:580px;top:129px;width:79px;height:27px">155.512</div>
<div class="yi wi" style="left:663px;top:129px;width:79px;height:27px"></div>

<!-- Scrollbar -->
<div style="left:7px;top:393px;width:761px;height:16px;background:#52ccac;border:2px solid;border-color:#37857a #cdf3ee #cdf3ee #37857a"></div>
<div style="left:21px;top:395px;width:680px;height:11px;background:#52ccac;border:1px solid;border-color:#cdf3ee #37857a #37857a #cdf3ee"></div>
<div style="left:701px;top:395px;width:53px;height:12px;background:#43ab92"></div>
<svg style="left:8px;top:395px" width="12" height="12"><path d="M11 1L1 6l10 5z" fill="#52ccac" stroke="#cdf3ee"/></svg>
<svg style="left:754px;top:395px" width="12" height="12"><path d="M1 1l10 5-10 5z" fill="#52ccac" stroke="#cdf3ee"/></svg>

<!-- Nav row -->
<div class="ln" style="left:4px;top:415px;width:765px;height:1px"></div>
<div class="ln" style="left:4px;top:448px;width:765px;height:1px"></div>
<div style="left:5px;top:416px;width:40px;height:32px;background:#ffc048;border:1px solid #222;font-size:12.500px;line-height:28px;padding-left:3px">T01</div>
<div style="left:46px;top:416px;width:181px;height:32px;background:#000"></div>
<div class="b" style="left:49px;top:418px;width:56px;height:28px">First</div>
<div class="b" style="left:109px;top:418px;width:31px;height:28px">&lt;--</div>
<div class="b" style="left:144px;top:418px;width:32px;height:28px">--&gt;</div>
<div class="b" style="left:178px;top:418px;width:48px;height:28px">Last</div>
<div class="tx" style="left:229px;top:425px">Index:</div>
<div class="i" style="left:288px;top:418px;width:58px;height:28px;background:#52ccac"></div>
<div class="b" style="left:351px;top:416px;width:28px;height:32px;border-width:3px;border-color:#bde9e4 #37857a #37857a #bde9e4"><svg style="left:5px;top:5px" width="18" height="18"><rect x=".5" y=".5" width="15" height="15" fill="none" stroke="#000"/><circle cx="8" cy="6" r="3.500" fill="none" stroke="#000"/><path d="M6 10v3h4v-3" fill="none" stroke="#000"/></svg></div>
<div class="b" style="left:381px;top:416px;width:28px;height:32px;border-width:3px;border-color:#bde9e4 #37857a #37857a #bde9e4"><svg style="left:5px;top:5px" width="18" height="18"><rect x=".5" y=".5" width="15" height="15" fill="none" stroke="#000"/><path d="M3 3h8v3M3 3c0 4 7 3 7 6s-3 4-7 4M6 13l2-2 2 2 2-2" fill="none" stroke="#000"/></svg></div>
<div class="b" style="left:411px;top:416px;width:28px;height:32px;border-width:3px;border-color:#bde9e4 #37857a #37857a #bde9e4"><svg style="left:5px;top:5px" width="18" height="18"><rect x=".5" y=".5" width="15" height="15" fill="none" stroke="#000"/><path d="M8 2l5 4v8H3V6z" fill="#777"/><path d="M2 2l12 12M14 2L2 14" stroke="#e01010" stroke-width="2"/></svg></div>
<div style="left:439px;top:416px;width:2px;height:32px;background:#111"></div>
<div class="ln" style="left:565px;top:416px;width:203px;height:32px"></div>
<div style="left:566px;top:416px;width:90px;height:32px;background:#9cdcdc"></div>
<div class="b opt l p" style="left:572px;top:418px;width:79px;height:26px;padding-left:3px">ml/my</div>
<div class="b opt l p" style="left:660px;top:418px;width:106px;height:26px;padding-left:4px">Regular</div>

<!-- Tools row -->
<div class="ln" style="left:4px;top:451px;width:765px;height:2px"></div>
<div style="left:4px;top:453px;width:765px;height:33px;background:#000"></div>
<div style="left:5px;top:453px;width:214px;height:33px;background:#52ccac"></div>
<div style="left:219px;top:453px;width:129px;height:33px;background:#9cdcdc;border-left:1px solid #000"></div>
<div class="b" style="left:221px;top:456px;width:125px;height:28px;letter-spacing:-.1px">Combine Tools</div>
<div style="left:350px;top:453px;width:358px;height:33px;background:#9cdcdc"></div>
<div class="tx" style="left:361px;top:463px">Merge Tools :</div>
<div class="b opt l" style="left:496px;top:456px;width:211px;height:28px;padding-left:4px">Update Tools Numbers</div>
<div style="left:710px;top:453px;width:58px;height:33px;background:#52ccac"></div>
<div class="b" style="left:712px;top:456px;width:54px;height:28px">Merge</div>

<!-- Action row -->
<div class="ln" style="left:4px;top:486px;width:765px;height:30px"></div>
<div style="left:5px;top:487px;width:191px;height:28px;background:#52ccac"></div>
<div class="b p" style="left:7px;top:488px;width:187px;height:25px">Apply</div>
<div style="left:196px;top:487px;width:191px;height:28px;background:#52ccac"></div>
<div class="b p" style="left:198px;top:488px;width:187px;height:25px">Calc Drills</div>
<div style="left:388px;top:487px;width:188px;height:28px;background:#52ccac"></div>
<div class="b p" style="left:390px;top:488px;width:185px;height:25px">Update Table</div>
<div class="b p" style="left:580px;top:489px;width:186px;height:23px">Close</div>

</body></html>
